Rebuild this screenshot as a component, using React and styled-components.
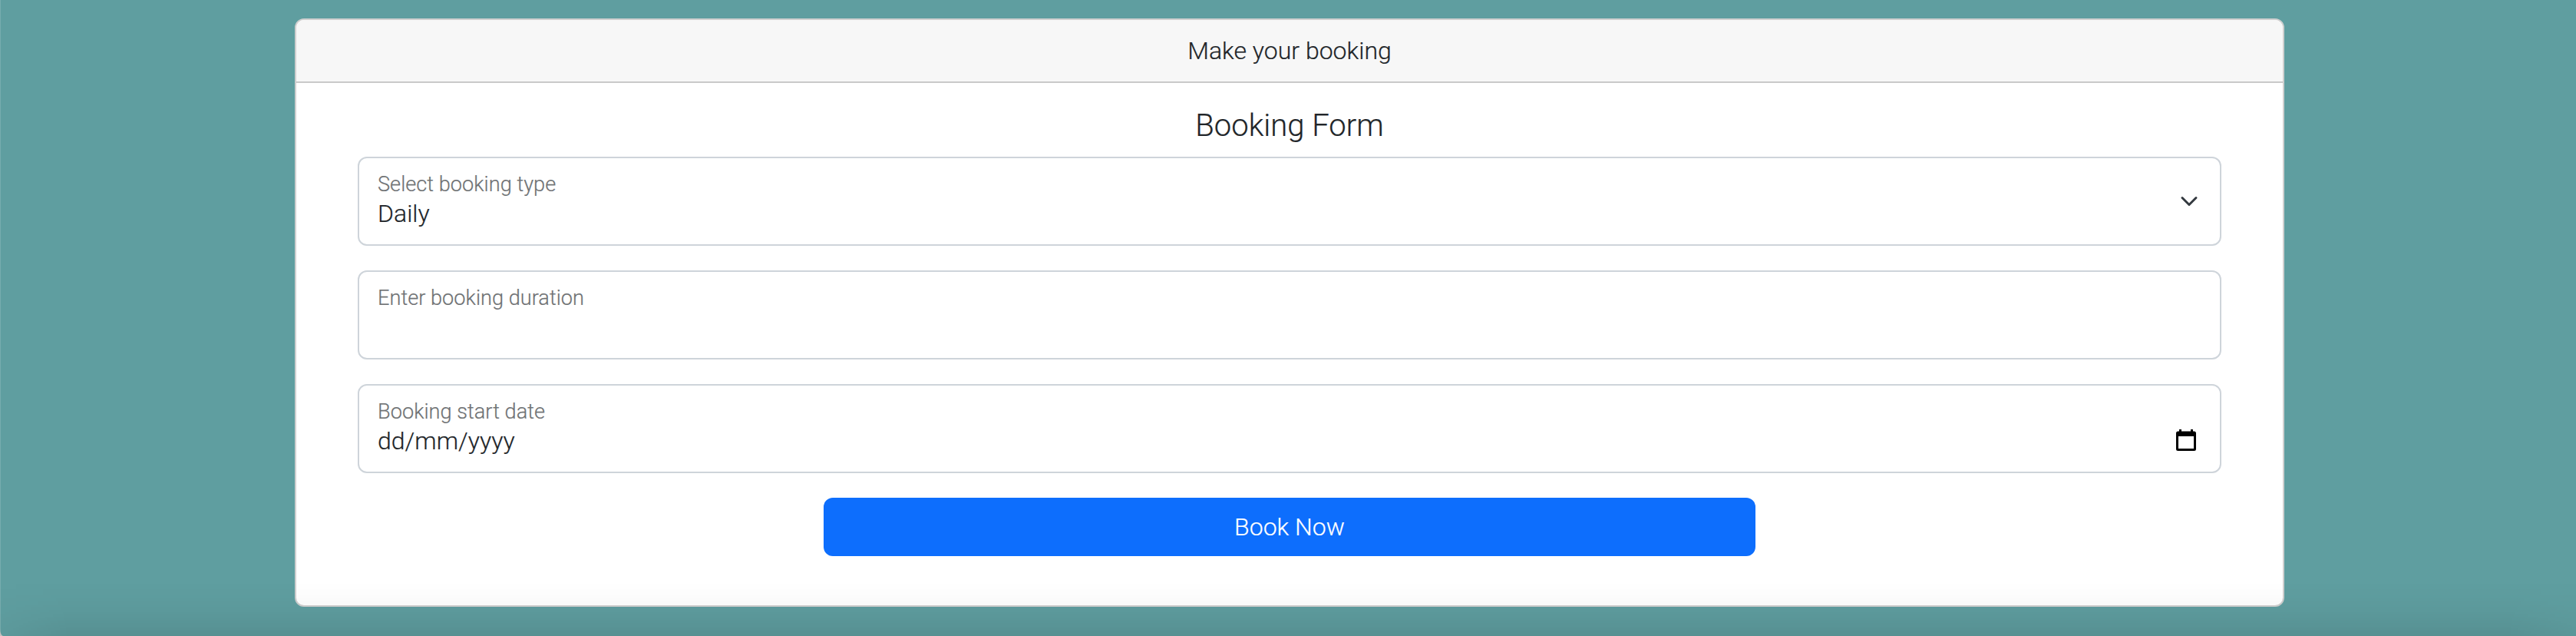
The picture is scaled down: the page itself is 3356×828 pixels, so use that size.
import React from 'react';
import styled, { createGlobalStyle } from 'styled-components';

const GlobalStyle = createGlobalStyle`
  *, *::before, *::after { box-sizing: border-box; }
  body {
    margin: 0;
    background: #c4c0be;
    color: #212529;
    font: 300 32px/1.5 Roboto, "Liberation Sans", sans-serif;
    -webkit-text-stroke: 0.2px currentColor;
  }
`;

const Page = styled.main`
  position: relative;
  height: 828px;
  padding: 24px 380px 0 384px;
  overflow: hidden;
  border-bottom-left-radius: 4px 10px;
  background: #5f9ea0;
`;

const BottomShade = styled.div`
  position: absolute;
  inset: auto 0 0 0;
  height: 72px;
  pointer-events: none;
  background: linear-gradient(
    to bottom,
    rgba(0, 0, 0, 0),
    rgba(0, 0, 0, 0.012) 30%,
    rgba(0, 0, 0, 0.035) 60%,
    rgba(0, 0, 0, 0.085)
  );
  mask-image: linear-gradient(
    to right,
    rgba(0, 0, 0, 0.35),
    #000 90px,
    #000 calc(100% - 90px),
    rgba(0, 0, 0, 0.5)
  );
`;

const WindowEdge = styled.div`
  position: absolute;
  inset: 0 auto 0 0;
  width: 1px;
  background: rgba(255, 255, 255, 0.15);
`;

const Card = styled.section`
  height: 766px;
  border: 2px solid #cfcfcf;
  border-radius: 12px;
  background: #fff;
  overflow: hidden;
`;

const CardHeader = styled.header`
  height: 82px;
  padding: 16px 32px;
  border-bottom: 2px solid #c9c9c9;
  background: #f7f7f7;
  text-align: center;
`;

const Form = styled.form`
  display: flex;
  flex-direction: column;
  align-items: center;
  padding: 32px 80px;
`;

const Title = styled.h4`
  margin: 0 0 16px;
  font-size: 40px;
  font-weight: 300;
  line-height: 48px;
`;

const Field = styled.div`
  display: flex;
  align-items: flex-start;
  justify-content: space-between;
  width: 100%;
  height: 116px;
  margin-bottom: 32px;
  padding: 0 24px;
  border: 2px solid #ced4da;
  border-radius: 12px;
`;

const FieldText = styled.div`
  display: flex;
  flex-direction: column;
  padding-top: 14px;
`;

const Label = styled.label`
  font-size: 27.2px;
  line-height: 40px;
  color: #6f7274;
`;

const Value = styled.span`
  margin-top: -2px;
  line-height: 40px;
`;

const Chevron = styled.svg`
  align-self: center;
  width: 24px;
  height: 24px;
  margin-right: 4px;
`;

const Calendar = styled.svg`
  width: 26px;
  height: 28px;
  margin: 57px 7px 0 0;
`;

const BookButton = styled.button`
  width: 50%;
  height: 76px;
  padding: 0;
  border: 0;
  border-radius: 12px;
  background: #0d6efd;
  color: #fff;
  font: inherit;
`;

export default function App() {
  return (
    <>
      <GlobalStyle />
      <Page>
        <Card>
          <CardHeader>Make your booking</CardHeader>
          <Form>
            <Title>Booking Form</Title>
            <Field>
              <FieldText>
                <Label>Select booking type</Label>
                <Value>Daily</Value>
              </FieldText>
              <Chevron
                viewBox="0 0 16 16"
                fill="none"
                stroke="#343a40"
                strokeWidth="2"
                strokeLinecap="round"
                strokeLinejoin="round"
              >
                <path d="m2 5 6 6 6-6" />
              </Chevron>
            </Field>
            <Field>
              <FieldText>
                <Label>Enter booking duration</Label>
              </FieldText>
            </Field>
            <Field>
              <FieldText>
                <Label>Booking start date</Label>
                <Value>dd/mm/yyyy</Value>
              </FieldText>
              <Calendar viewBox="0 0 26 28">
                <path
                  fillRule="evenodd"
                  d="M4 0h3v2.500h12V0h3v2.500h1.500A2.500 2.500 0 0 1 26 5v20.500a2.500 2.500 0 0 1-2.500 2.500h-21A2.500 2.500 0 0 1 0 25.500V5a2.500 2.500 0 0 1 2.500-2.500H4zM3 9v16h20V9z"
                />
              </Calendar>
            </Field>
            <BookButton type="button">Book Now</BookButton>
          </Form>
        </Card>
        <BottomShade />
        <WindowEdge />
      </Page>
    </>
  );
}
